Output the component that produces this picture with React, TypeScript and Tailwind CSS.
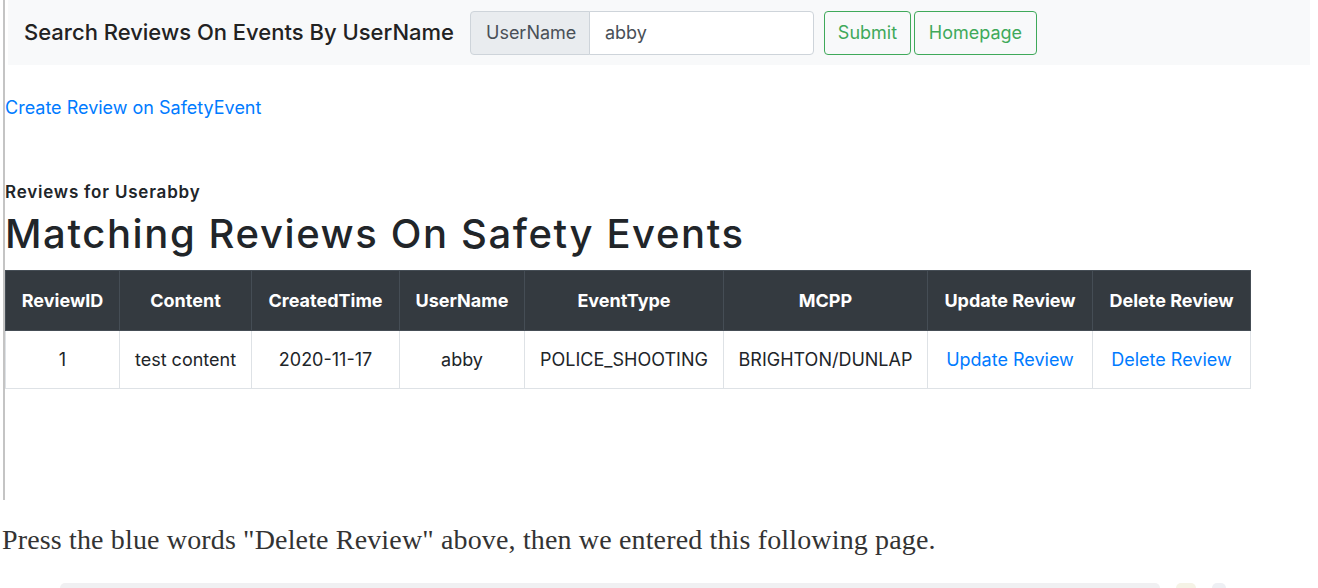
const columns = [
  { label: "ReviewID", w: "w-[114px]" },
  { label: "Content", w: "w-[132px]" },
  { label: "CreatedTime", w: "w-[148px]" },
  { label: "UserName", w: "w-[125px]" },
  { label: "EventType", w: "w-[199px]" },
  { label: "MCPP", w: "w-[204px]" },
  { label: "Update Review", w: "w-[165px]" },
  { label: "Delete Review", w: "w-[158px]" },
];

const row = ["1", "test content", "2020-11-17", "abby", "POLICE_SHOOTING", "BRIGHTON/DUNLAP"];

export default function App() {
  return (
    <div className="w-[1318px] h-[588px] overflow-hidden bg-white font-['Inter',sans-serif] text-[#212529]">
      <div className="ml-[3px] h-[500px] border-l-2 border-[#c4c4c4]">
        <nav className="ml-[3px] mr-[8px] flex h-[65px] items-center bg-[#f8f9fa] pl-[16px]">
          <span className="text-[22px] font-medium text-[#222]">Search Reviews On Events By UserName</span>
          <div className="ml-[16px] flex h-[44px]">
            <span className="flex w-[120px] items-center rounded-l-[4px] border border-[#ced4da] bg-[#e9ecef] px-[15px] text-[18px] text-[#495057]">
              UserName
            </span>
            <span className="-ml-px flex w-[225px] items-center rounded-r-[4px] border border-[#ced4da] bg-white px-[15px] text-[18px] text-[#495057]">
              abby
            </span>
          </div>
          <button className="ml-[10px] h-[44px] w-[87px] rounded-[4px] border border-[#3fa95a] text-[18px] text-[#3fa95a]">
            Submit
          </button>
          <button className="ml-[3px] h-[44px] w-[123px] rounded-[4px] border border-[#3fa95a] text-[18px] text-[#3fa95a]">
            Homepage
          </button>
        </nav>

        <div className="mt-[33px] text-[18px] leading-[20px] text-[#007bff]">Create Review on SafetyEvent</div>

        <div className="mt-[64px] text-[17px] font-semibold leading-[20px] tracking-[0.8px]">Reviews for Userabby</div>
        <h1 className="mt-[8px] text-[40px] font-medium leading-[48px] tracking-[1.6px]">Matching Reviews On Safety Events</h1>

        <table className="mt-[12px] border-collapse text-center text-[18px]">
          <thead>
            <tr className="h-[60px] bg-[#343a40] text-white">
              {columns.map((c) => (
                <th key={c.label} className={`${c.w} border border-[#454d55] px-1 font-bold`}>
                  {c.label}
                </th>
              ))}
            </tr>
          </thead>
          <tbody>
            <tr className="h-[58px]">
              {row.map((v, i) => (
                <td key={i} className="border border-[#dee2e6] px-1">
                  {v}
                </td>
              ))}
              <td className="border border-[#dee2e6] px-1 text-[#007bff]">Update Review</td>
              <td className="border border-[#dee2e6] px-1 text-[#007bff]">Delete Review</td>
            </tr>
          </tbody>
        </table>
      </div>

      <p className="mt-[24px] ml-[2px] font-['Liberation_Serif',serif] text-[28px] leading-[32px] tracking-[0.15px] text-[#333]">
        Press the blue words "Delete Review" above, then we entered this following page.
      </p>

      <div className="mt-[27px] ml-[60px] flex items-center gap-4">
        <div className="h-[10px] w-[1100px] rounded-full bg-[#f0f0f2]" />
        <div className="h-[10px] w-[20px] rounded-full bg-[#f5f3e6]" />
        <div className="h-[10px] w-[14px] rounded-full bg-[#eef0f4]" />
      </div>
    </div>
  );
}
